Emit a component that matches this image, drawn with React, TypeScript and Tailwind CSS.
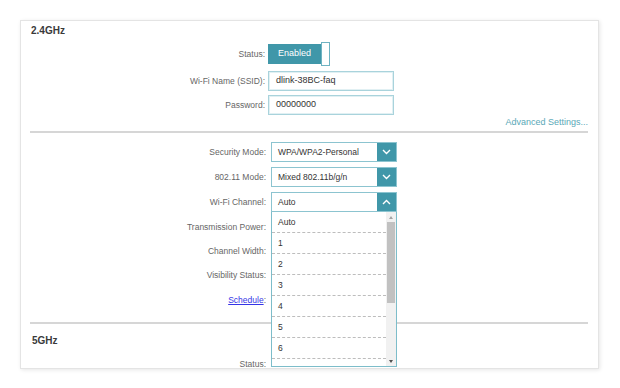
import React from 'react';

// Wi-Fi settings panel (2.4GHz / 5GHz) with an open channel dropdown

const font = { fontFamily: '"Liberation Sans", Arial, sans-serif' };

function Chevron({ up = false }: { up?: boolean }) {
  return (
    <svg width="9" height="6" viewBox="0 0 9 6" fill="none">
      <polyline
        points={up ? '1,5 4.5,1.5 8,5' : '1,1 4.5,4.5 8,1'}
        stroke="#fff"
        strokeWidth="1.4"
      />
    </svg>
  );
}

function Label({ children }: { children: React.ReactNode }) {
  return (
    <div className="w-[245px] shrink-0 text-right text-[8.5px] text-[#666] leading-none">
      {children}
    </div>
  );
}

function Select({ value, up = false }: { value: string; up?: boolean }) {
  return (
    <div className="flex w-[126px] h-[20px] border border-[#8cc4d0] bg-white">
      <div className="flex-1 flex items-center pl-[6px] text-[8.5px] text-[#333]">{value}</div>
      <div className="w-[19px] bg-[#4097a9] flex items-center justify-center">
        <Chevron up={up} />
      </div>
    </div>
  );
}

function Dropdown() {
  const items = ['Auto', '1', '2', '3', '4', '5', '6'];
  return (
    <div className="absolute top-full left-0 w-[126px] h-[155px] bg-white border border-[#7dbdca] border-t-0 overflow-hidden z-10">
      <div className="mr-[10px]">
        {items.map((it) => (
          <div
            key={it}
            className="h-[21px] flex items-center pl-[6px] text-[8.5px] text-[#333] border-b border-dashed border-[#bdbdbd]"
          >
            {it}
          </div>
        ))}
      </div>
      {/* scrollbar */}
      <div className="absolute right-0 top-0 bottom-0 w-[10px] bg-[#f1f1f1] flex flex-col items-center">
        <div className="h-[10px] flex items-center justify-center">
          <div className="w-0 h-0 border-l-[2.5px] border-r-[2.5px] border-b-[3px] border-l-transparent border-r-transparent border-b-[#a3a3a3]" />
        </div>
        <div className="w-[8px] h-[81px] bg-[#c1c1c1]" />
        <div className="flex-1" />
        <div className="h-[10px] flex items-center justify-center">
          <div className="w-0 h-0 border-l-[2.5px] border-r-[2.5px] border-t-[3px] border-l-transparent border-r-transparent border-t-[#505050]" />
        </div>
      </div>
    </div>
  );
}

export default function App() {
  return (
    <div className="w-[620px] h-[388px] bg-white pt-[20px] pl-[20px]" style={font}>
      <div className="w-[579px] h-[349px] overflow-hidden bg-white border border-[#e4e4e4] shadow-[1px_1px_4px_rgba(0,0,0,0.10)]">
        {/* 2.4GHz */}
        <div className="h-[19px] pl-[10px] flex items-center text-[10px] font-bold text-[#3a3a3a]">2.4GHz</div>

        <div className="mt-[2px] h-[24px] flex items-center">
          <div className="w-[244px] shrink-0 text-right text-[8.5px] text-[#666]">Status:</div>
          <div className="ml-[3px] flex items-center">
            <div className="w-[53px] h-[20px] bg-[#4097a9] text-white text-[9px] flex items-center justify-center">
              Enabled
            </div>
            <div className="w-[9px] h-[24px] bg-white border border-[#6fb3c2]" />
          </div>
        </div>

        <div className="mt-[5px] h-[20px] flex items-center">
          <div className="w-[244px] shrink-0 text-right text-[8.5px] text-[#666]">Wi-Fi Name (SSID):</div>
          <div className="ml-[3px] w-[126px] h-[20px] border border-[#a9d3dc] shadow-[inset_0_0_0_1px_#e1f0f3] flex items-center pl-[7px] text-[9px] text-[#333]">
            dlink-38BC-faq
          </div>
        </div>

        <div className="mt-[4px] h-[20px] flex items-center">
          <div className="w-[244px] shrink-0 text-right text-[8.5px] text-[#666]">Password:</div>
          <div className="ml-[3px] w-[126px] h-[20px] border border-[#a9d3dc] shadow-[inset_0_0_0_1px_#e1f0f3] flex items-center pl-[7px] text-[9px] text-[#333]">
            00000000
          </div>
        </div>

        <div className="h-[16px] flex items-center justify-end pr-[10px] text-[9px] text-[#5aa8b7]">
          Advanced Settings...
        </div>

        <div className="ml-[9px] mr-[10px] h-[2px] bg-[#d6d6d6]" />

        <div className="mt-[9px] h-[20px] flex items-center">
          <Label>Security Mode:</Label>
          <div className="ml-[5px]">
            <Select value="WPA/WPA2-Personal" />
          </div>
        </div>

        <div className="mt-[5px] h-[20px] flex items-center">
          <Label>802.11 Mode:</Label>
          <div className="ml-[5px]">
            <Select value="Mixed 802.11b/g/n" />
          </div>
        </div>

        <div className="mt-[5px] h-[20px] flex items-center">
          <Label>Wi-Fi Channel:</Label>
          <div className="ml-[5px] relative">
            <Select value="Auto" up />
            <Dropdown />
          </div>
        </div>

        <div className="mt-[5px] h-[20px] flex items-center">
          <Label>Transmission Power:</Label>
        </div>
        <div className="mt-[4px] h-[20px] flex items-center">
          <Label>Channel Width:</Label>
        </div>
        <div className="mt-[4px] h-[20px] flex items-center">
          <Label>Visibility Status:</Label>
        </div>
        <div className="mt-[5px] h-[20px] flex items-center">
          <Label>
            <span className="text-[#3535e6] underline">Schedule</span>:
          </Label>
        </div>

        <div className="mt-[12px] ml-[9px] mr-[10px] h-[2px] bg-[#d6d6d6]" />

        {/* 5GHz */}
        <div className="mt-[8px] h-[16px] pl-[11px] flex items-center text-[10px] font-bold text-[#3a3a3a]">5GHz</div>
        <div className="mt-[6px] h-[20px] flex items-center">
          <Label>Status:</Label>
        </div>
      </div>
    </div>
  );
}
